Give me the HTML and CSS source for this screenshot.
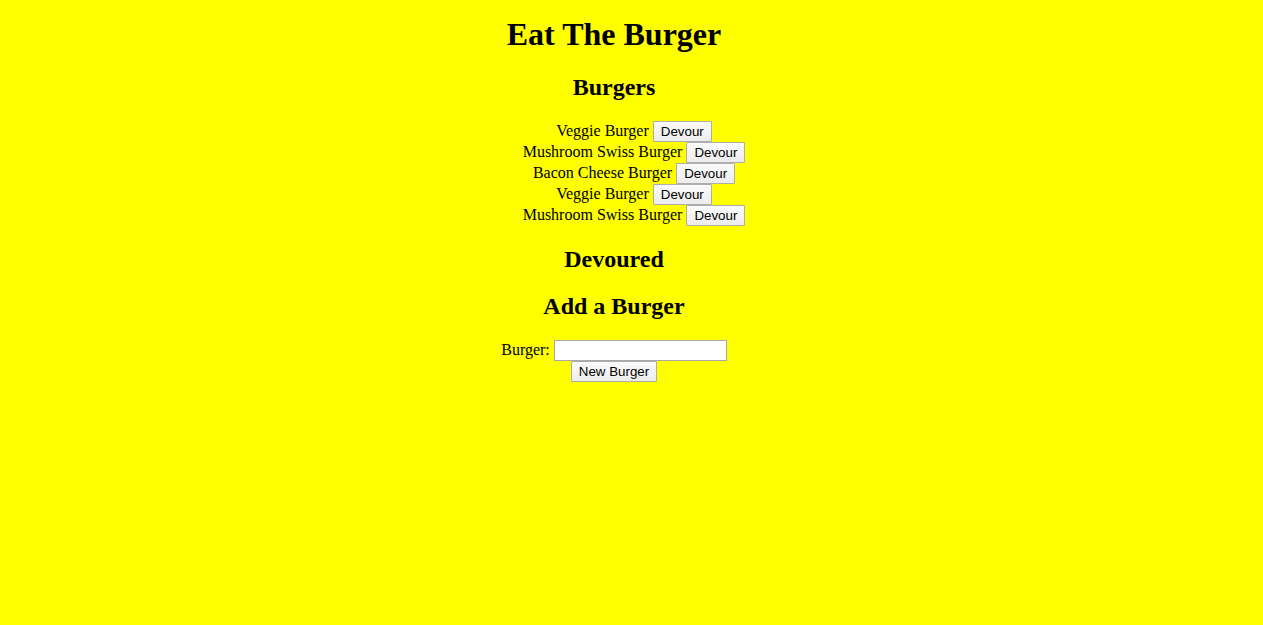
FILE: index.html
```html
<!DOCTYPE html>
<html>
<head>
<meta charset="utf-8">
<title>Eat The Burger</title>
<link rel="stylesheet" href="styles.css">
</head>
<body class="page">
<h1 class="title">Eat The Burger</h1>
<h2 class="section">Burgers</h2>
<ul class="list">
  <li>Veggie Burger <button class="btn">Devour</button></li>
  <li>Mushroom Swiss Burger <button class="btn">Devour</button></li>
  <li>Bacon Cheese Burger <button class="btn">Devour</button></li>
  <li>Veggie Burger <button class="btn">Devour</button></li>
  <li>Mushroom Swiss Burger <button class="btn">Devour</button></li>
</ul>
<h2 class="section">Devoured</h2>
<ul class="list"></ul>
<h2 class="section">Add a Burger</h2>
<form class="form">
  <label>Burger: <input class="field" type="text"></label><br>
  <button class="btn" type="button">New Burger</button>
</form>
</body>
</html>
```
FILE: styles.css
```css
html { background: #ffff00; }
.page {
  margin: 0 43px 8px 8px;
  padding-top: 1px;
  background: #ffff00;
  font-family: "Liberation Serif", "Times New Roman", serif;
  font-size: 16px;
  color: #000;
  text-align: center;
}
.title { font-size: 32px; margin: 14.5px 0 21px; }
.section { font-size: 24px; margin: 0.83em 0; }
.list { list-style: none; padding: 0 0 1px 40px; margin: 0; }
.list:empty { padding-bottom: 0; }
.list li { line-height: 21px; height: 21px; }
.btn {
  font-family: "Liberation Sans", Arial, sans-serif;
  font-size: 13.33px;
  color: #000;
  background: linear-gradient(#fbfbfb, #ececec);
  border: 1px solid #adadad;
  border-radius: 1px;
  box-sizing: border-box;
  height: 21px;
  padding: 0 7px;
  margin: 0;
  line-height: 19px;
  vertical-align: baseline;
}
.field {
  box-sizing: border-box;
  width: 173px;
  height: 21px;
  padding: 1px 2px;
  border: 1px solid #a9a9a9;
  background: #fff;
  font-size: 13.33px;
  margin: 0;
  vertical-align: baseline;
}
```
